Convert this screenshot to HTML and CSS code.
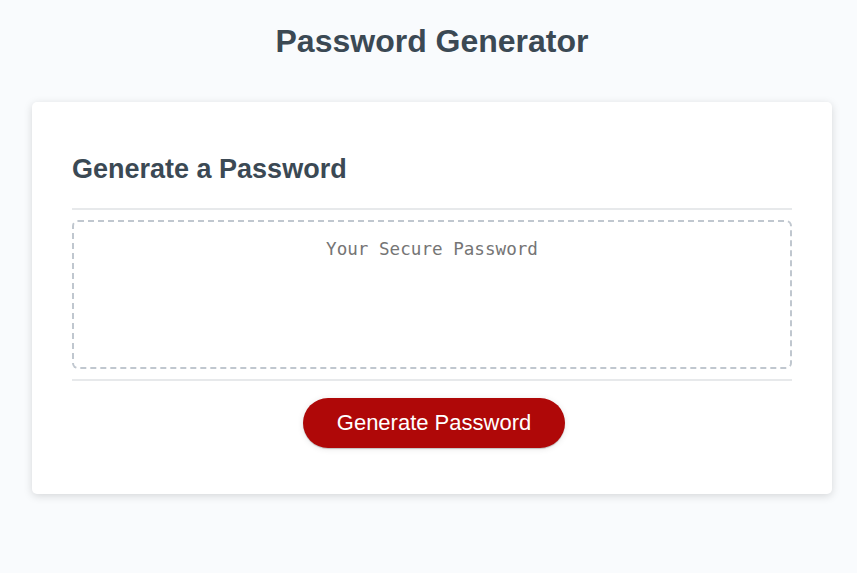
FILE: index.html
```html
<!DOCTYPE html>
<html lang="en">
<head>
<meta charset="UTF-8">
<title>Password Generator</title>
<link rel="stylesheet" href="styles.css">
</head>
<body>
<div class="wrapper">
  <header class="page-header">
    <h1>Password Generator</h1>
  </header>
  <div class="card">
    <div class="card-header">
      <h2>Generate a Password</h2>
    </div>
    <div class="card-body">
      <textarea readonly id="password" placeholder="Your Secure Password" aria-label="Generated Password"></textarea>
    </div>
    <div class="card-footer">
      <button id="generate" class="btn">Generate Password</button>
    </div>
  </div>
</div>
</body>
</html>
```

FILE: styles.css
```css
* {
  box-sizing: border-box;
}

html, body {
  margin: 0;
  padding: 0;
}

body {
  font-family: "Liberation Sans", Arial, sans-serif;
  background-color: #f9fbfd;
  color: #3b4954;
}

.wrapper {
  padding: 23px 25px 40px 32px;
}

.page-header {
  text-align: center;
  padding-bottom: 42px;
}

.page-header h1 {
  margin: 0;
  font-size: 32px;
  line-height: 37px;
  font-weight: bold;
}

.card {
  background-color: #fff;
  border-radius: 5px;
  box-shadow: rgba(0, 0, 0, 0.15) 0 2px 8px 0;
  max-width: 800px;
  margin: 0 auto;
  padding: 30px 40px;
  font-size: 18px;
}

.card-header h2 {
  margin: 22px 0 0;
  font-size: 27px;
  line-height: 31px;
  font-weight: bold;
}

.card-header::after {
  content: "";
  display: block;
  height: 2px;
  background: #e7e9eb;
  margin-top: 23px;
}

.card-body {
  padding: 10px 0;
}

.card-body textarea {
  display: block;
  width: 100%;
  height: 149px;
  margin: 0;
  padding: 17px 10px 10px;
  border: 2px dashed #c0c7cf;
  border-radius: 6px;
  resize: none;
  overflow: hidden;
  text-align: center;
  font-family: "DejaVu Sans Mono", monospace;
  font-size: 17.6px;
  color: #3b4954;
  background: #fff;
}

.card-body textarea::placeholder {
  color: #757575;
}

.card-footer {
  text-align: center;
}

.card-footer::before {
  content: "";
  display: block;
  height: 2px;
  background: #e7e9eb;
  margin-bottom: 17px;
}

.btn {
  border: none;
  background-color: #af0808;
  border-radius: 25px;
  box-shadow: rgba(0, 0, 0, 0.1) 0 1px 6px 0, rgba(0, 0, 0, 0.2) 0 1px 1px 0;
  color: #fff;
  display: inline-block;
  font-family: "Liberation Sans", Arial, sans-serif;
  font-size: 22px;
  line-height: 22px;
  margin: 0 0 16px 4px;
  padding: 14px 34px;
  cursor: pointer;
}
```
